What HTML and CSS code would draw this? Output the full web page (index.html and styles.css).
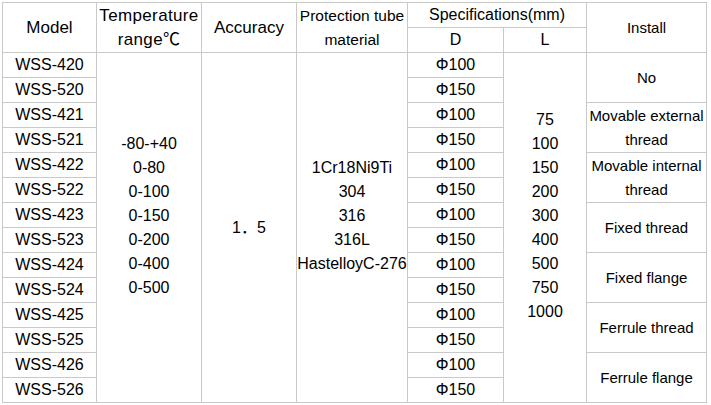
FILE: index.html
```html
<!DOCTYPE html>
<html>
<head>
<meta charset="utf-8">
<link rel="stylesheet" href="styles.css">
</head>
<body>
<table class="spec">
  <colgroup>
    <col class="c-model"><col class="c-temp"><col class="c-acc"><col class="c-mat"><col class="c-d"><col class="c-l"><col class="c-inst">
  </colgroup>
  <thead>
    <tr>
      <th rowspan="2" class="big">Model</th>
      <th rowspan="2" class="big wide">Temperature<br>range℃</th>
      <th rowspan="2" class="big">Accuracy</th>
      <th rowspan="2" class="mid">Protection tube<br>material</th>
      <th colspan="2">Specifications(mm)</th>
      <th rowspan="2" class="small">Install</th>
    </tr>
    <tr>
      <th>D</th>
      <th>L</th>
    </tr>
  </thead>
  <tbody>
    <tr>
      <td>WSS-420</td>
      <td rowspan="14" class="list">-80-+40<br>0-80<br>0-100<br>0-150<br>0-200<br>0-400<br>0-500</td>
      <td rowspan="14">1．5</td>
      <td rowspan="14" class="list">1Cr18Ni9Ti<br>304<br>316<br>316L<br>HastelloyC-276</td>
      <td>Φ100</td>
      <td rowspan="14" class="list">75<br>100<br>150<br>200<br>300<br>400<br>500<br>750<br>1000</td>
      <td rowspan="2" class="small">No</td>
    </tr>
    <tr><td>WSS-520</td><td>Φ150</td></tr>
    <tr><td>WSS-421</td><td>Φ100</td><td rowspan="2" class="small">Movable external<br>thread</td></tr>
    <tr><td>WSS-521</td><td>Φ150</td></tr>
    <tr><td>WSS-422</td><td>Φ100</td><td rowspan="2" class="small">Movable internal<br>thread</td></tr>
    <tr><td>WSS-522</td><td>Φ150</td></tr>
    <tr><td>WSS-423</td><td>Φ100</td><td rowspan="2" class="small">Fixed thread</td></tr>
    <tr><td>WSS-523</td><td>Φ150</td></tr>
    <tr><td>WSS-424</td><td>Φ100</td><td rowspan="2" class="small">Fixed flange</td></tr>
    <tr><td>WSS-524</td><td>Φ150</td></tr>
    <tr><td>WSS-425</td><td>Φ100</td><td rowspan="2" class="small">Ferrule thread</td></tr>
    <tr><td>WSS-525</td><td>Φ150</td></tr>
    <tr><td>WSS-426</td><td>Φ100</td><td rowspan="2" class="small">Ferrule flange</td></tr>
    <tr><td>WSS-526</td><td>Φ150</td></tr>
  </tbody>
</table>
</body>
</html>
```
FILE: styles.css
```css
html, body {
  background: #ffffff;
}
body {
  margin: 2px;
  font-family: "Liberation Sans", Arial, "Noto Sans CJK SC", sans-serif;
  font-size: 16px;
  color: #000000;
}
.spec {
  border-collapse: separate;
  border-spacing: 0;
  table-layout: fixed;
  width: 705px;
  border-left: 1px solid #c9c9c9;
  border-top: 1px solid #c9c9c9;
}
.c-model { width: 94px; }
.c-temp { width: 105px; }
.c-acc { width: 95px; }
.c-mat { width: 111px; }
.c-d { width: 96px; }
.c-l { width: 83px; }
.c-inst { width: 120px; }
.spec th,
.spec td {
  box-sizing: border-box;
  height: 25px;
  padding: 0;
  border-right: 1px solid #c9c9c9;
  border-bottom: 1px solid #c9c9c9;
  text-align: center;
  vertical-align: middle;
  font-weight: normal;
  line-height: 24px;
  white-space: nowrap;
  overflow: hidden;
}
.spec .big { font-size: 17px; }
.spec .wide { letter-spacing: 0.35px; }
.spec .mid { font-size: 15.5px; }
.spec .small { font-size: 15px; }
.spec .list { padding-bottom: 24px; }
```
